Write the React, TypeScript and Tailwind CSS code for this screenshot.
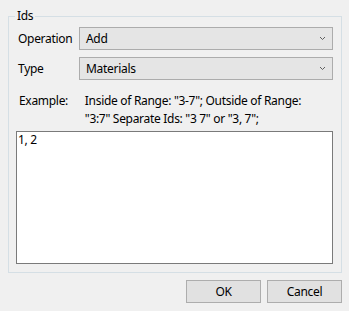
import React from "react";

function Chevron() {
  return (
    <svg width="7" height="5" viewBox="0 0 7 5" className="block">
      <path d="M1 1 L3.5 3.5 L6 1" fill="none" stroke="#606060" strokeWidth="1" />
    </svg>
  );
}

function Combo({ value }: { value: string }) {
  return (
    <div className="flex h-[23px] w-[254px] items-center justify-between border border-[#acacac] bg-[#e5e5e5] pl-[6px] pr-[6px]">
      <span>{value}</span>
      <Chevron />
    </div>
  );
}

export default function App() {
  return (
    <div
      className="relative h-[311px] w-[349px] bg-[#f0f0f0] text-[12px] leading-[16px] tracking-[-0.3px] text-black"
      style={{ fontFamily: '"Noto Sans", sans-serif' }}
    >
      <div className="pl-[8px] pt-[16px] pr-[7px]">
        <div className="relative h-[257px] border border-[#d5dfe5] pl-[9px] pr-[7px] pt-[10px]">
          <span className="absolute -top-[9px] left-[6px] bg-[#f0f0f0] px-[2px]">Ids</span>
          <div className="flex items-center">
            <span className="w-[61px]">Operation</span>
            <Combo value="Add" />
          </div>
          <div className="mt-[7px] flex items-center">
            <span className="w-[61px]">Type</span>
            <Combo value="Materials" />
          </div>
          <div className="mt-[12px] flex leading-[18px]">
            <span className="w-[67px] pl-[1px]">Example:</span>
            <span className="w-[250px]">
              Inside of Range: "3-7"; Outside of Range:
              <br />
              "3:7" Separate Ids: "3 7" or "3, 7";
            </span>
          </div>
          <div className="ml-[-2px] mt-[3px] h-[133px] w-[317px] border border-[#7a7a7a] bg-white px-[1px]">
            1, 2
          </div>
        </div>
      </div>
      <div className="mt-[7px] flex justify-end gap-[6px] pr-[7px]">
        <button className="h-[23px] w-[75px] border border-[#adadad] bg-[#e1e1e1]">OK</button>
        <button className="h-[23px] w-[75px] border border-[#adadad] bg-[#e1e1e1]">Cancel</button>
      </div>
    </div>
  );
}
